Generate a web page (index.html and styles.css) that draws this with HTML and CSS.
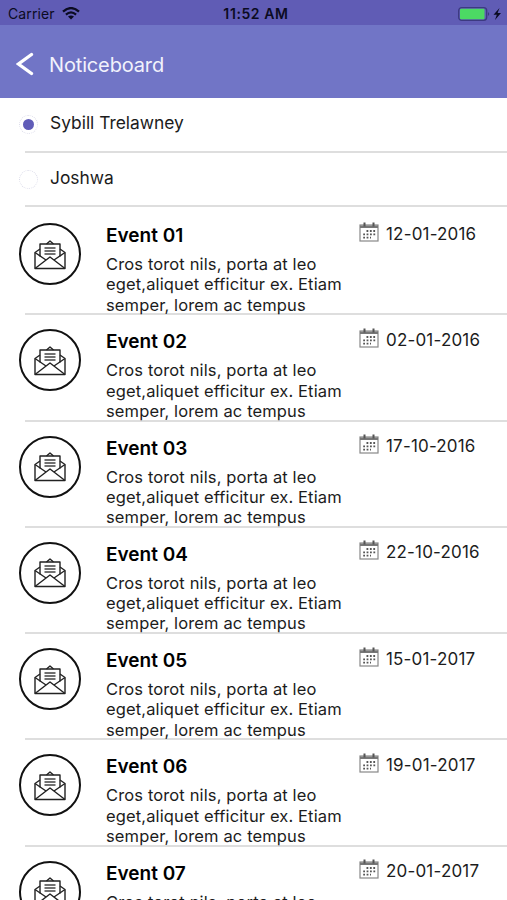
FILE: index.html
```html
<!DOCTYPE html>
<html lang="en">

<head>
    <meta charset="UTF-8">
    <meta name="viewport" content="width=device-width, initial-scale=1.0">
    <title>Noticeboard</title>
    <link rel="stylesheet" href="styles.css">
</head>

<body>
    <svg class="defs" width="0" height="0">
        <symbol id="mail" viewBox="0 0 32 30">
            <g fill="none" stroke="#222" stroke-width="1.4" stroke-linejoin="round">
                <path d="M6 9 L1 12.5 V28.5 H31 V12.5 L26 9" />
                <path d="M6 16.500 V4 H26 V16.500" />
                <path d="M12.500 4 L16 1 L19.500 4" />
                <path d="M1 12.500 L12 20 M31 12.500 L20 20" />
                <path d="M1 28.500 L16 17 L31 28.500" />
                <path d="M10.500 8 H21.500 M10.500 11 H21.500 M10.500 14 H21.500" stroke="#444" />
            </g>
        </symbol>
        <symbol id="calendar" viewBox="0 0 20 20">
            <rect x="1" y="3" width="18" height="16" fill="none" stroke="#888" stroke-width="1.200" />
            <path d="M1 3.500 H19 V6 H1 Z" fill="#777" />
            <path d="M5.500 .5 V4.500 M14.500 .5 V4.500" stroke="#555" stroke-width="2" />
            <path d="M7.500 9 H17 M4.200 12.300 H17 M4.200 15.600 H12" fill="none" stroke="#555" stroke-width="1.800" stroke-dasharray="1.800 1.600" />
        </symbol>
    </svg>

    <div class="status">
        <div class="carrier">
            <span>Carrier</span>
            <svg width="18" height="13" viewBox="0 0 18 13">
                <path d="M1 4.600 Q9 -2.400 17 4.600" fill="none" stroke="#0b0b22" stroke-width="2.300" />
                <path d="M3.900 7.600 Q9 3.200 14.100 7.600" fill="none" stroke="#0b0b22" stroke-width="2.200" />
                <path d="M9 12.500 L6 9.600 Q9 7.200 12 9.600 Z" fill="#0b0b22" />
            </svg>
        </div>
        <div class="time">11:52 AM</div>
        <div class="battery">
            <svg width="46" height="16" viewBox="0 0 46 16">
                <rect x="0.700" y="1.700" width="28" height="12.600" rx="3" fill="none" stroke="#3c3a80" stroke-width="1.300" />
                <rect x="2" y="2.800" width="24.500" height="10.400" rx="1" fill="#4cd964" />
                <path d="M30 6 Q32.500 8 30 10 Z" fill="#3c3a80" />
                <path d="M41.500 2 L35.500 8.800 H38.800 L37 14 L43 7 H39.600 Z" fill="#0b0b22" />
            </svg>
        </div>
    </div>

    <div class="header">
        <svg class="back" width="18" height="24" viewBox="0 0 18 24">
            <path d="M15.500 2.500 L2.500 12 L15.500 21.500" fill="none" stroke="#fff" stroke-width="3.300" stroke-linecap="round" />
        </svg>
        <h1>Noticeboard</h1>
    </div>

    <ul class="names">
        <li><i class="radio on"></i><span>Sybill Trelawney</span></li>
        <li><i class="radio"></i><span>Joshwa</span></li>
    </ul>

    <ul class="events">
        <li>
            <div class="circle"><svg><use href="#mail" /></svg></div>
            <div class="text">
                <h2>Event 01</h2>
                <p>Cros torot nils, porta at leo<br>eget,aliquet efficitur ex. Etiam<br>semper, lorem ac tempus</p>
            </div>
            <div class="date"><svg><use href="#calendar" /></svg><span>12-01-2016</span></div>
        </li>
        <li>
            <div class="circle"><svg><use href="#mail" /></svg></div>
            <div class="text">
                <h2>Event 02</h2>
                <p>Cros torot nils, porta at leo<br>eget,aliquet efficitur ex. Etiam<br>semper, lorem ac tempus</p>
            </div>
            <div class="date"><svg><use href="#calendar" /></svg><span>02-01-2016</span></div>
        </li>
        <li>
            <div class="circle"><svg><use href="#mail" /></svg></div>
            <div class="text">
                <h2>Event 03</h2>
                <p>Cros torot nils, porta at leo<br>eget,aliquet efficitur ex. Etiam<br>semper, lorem ac tempus</p>
            </div>
            <div class="date"><svg><use href="#calendar" /></svg><span>17-10-2016</span></div>
        </li>
        <li>
            <div class="circle"><svg><use href="#mail" /></svg></div>
            <div class="text">
                <h2>Event 04</h2>
                <p>Cros torot nils, porta at leo<br>eget,aliquet efficitur ex. Etiam<br>semper, lorem ac tempus</p>
            </div>
            <div class="date"><svg><use href="#calendar" /></svg><span>22-10-2016</span></div>
        </li>
        <li>
            <div class="circle"><svg><use href="#mail" /></svg></div>
            <div class="text">
                <h2>Event 05</h2>
                <p>Cros torot nils, porta at leo<br>eget,aliquet efficitur ex. Etiam<br>semper, lorem ac tempus</p>
            </div>
            <div class="date"><svg><use href="#calendar" /></svg><span>15-01-2017</span></div>
        </li>
        <li>
            <div class="circle"><svg><use href="#mail" /></svg></div>
            <div class="text">
                <h2>Event 06</h2>
                <p>Cros torot nils, porta at leo<br>eget,aliquet efficitur ex. Etiam<br>semper, lorem ac tempus</p>
            </div>
            <div class="date"><svg><use href="#calendar" /></svg><span>19-01-2017</span></div>
        </li>
        <li>
            <div class="circle"><svg><use href="#mail" /></svg></div>
            <div class="text">
                <h2>Event 07</h2>
                <p>Cros torot nils, porta at leo<br>eget,aliquet efficitur ex. Etiam<br>semper, lorem ac tempus</p>
            </div>
            <div class="date"><svg><use href="#calendar" /></svg><span>20-01-2017</span></div>
        </li>
    </ul>
</body>

</html>
```

FILE: styles.css
```css
* {
    margin: 0;
    padding: 0;
    box-sizing: border-box;
}

body {
    height: 900px;
    overflow: hidden;
    display: flex;
    flex-direction: column;
    background: #fff;
    color: #1c1c1c;
    font-family: Inter, "Liberation Sans", sans-serif;
}

ul {
    list-style: none;
}

.defs {
    display: none;
}

/* status bar */
.status {
    flex: none;
    height: 25px;
    padding: 2px 3px 0 8px;
    display: grid;
    grid-template-columns: 1fr auto 1fr;
    align-items: center;
    background: #605cb5;
    color: #0b0b22;
    font-size: 14px;
}

.carrier {
    display: flex;
    align-items: center;
    gap: 7px;
    letter-spacing: 0.1px;
}

.time {
    font-weight: 600;
    letter-spacing: 0.600px;
}

.battery {
    display: flex;
    justify-content: flex-end;
}

.header {
    flex: none;
    height: 73px;
    padding: 5px 0 0 16px;
    display: flex;
    align-items: center;
    gap: 15px;
    background: #7175c6;
    color: #fff;
}

.header h1 {
    margin-top: 1px;
    font-size: 20px;
    font-weight: 400;
    letter-spacing: -0.150px;
    color: #f2f2fc;
}

.names,
.events {
    flex: none;
}

.names li {
    height: 54px;
    padding: 0 0 6px 19px;
    display: flex;
    align-items: center;
    gap: 12px;
    font-size: 17.400px;
}

.names li:first-child {
    height: 55px;
}

/* divider starts 25px from the left edge */
.names li,
.events li {
    background: linear-gradient(#dedede, #dedede) 25px 100% / 100% 2px no-repeat;
}

.radio {
    width: 19px;
    height: 19px;
    margin-top: 4px;
    border: 1px dotted #dcdcea;
    border-radius: 50%;
    display: flex;
    align-items: center;
    justify-content: center;
}

.radio.on::after {
    content: "";
    width: 11px;
    height: 11px;
    border-radius: 50%;
    background: #605cb8;
}

.events {
    padding-top: 2px;
}

.events li {
    height: 106.300px;
    padding-left: 19px;
    display: flex;
    align-items: flex-start;
}

.circle {
    width: 62px;
    height: 62px;
    margin-top: 14px;
    padding-top: 1px;
    border: 2.500px solid #111;
    border-radius: 50%;
    display: flex;
    align-items: center;
    justify-content: center;
}

.circle svg {
    width: 32px;
    height: 30px;
}

.text {
    width: 253px;
    margin: 15px 0 0 25px;
    white-space: nowrap;
}

.text h2 {
    font-size: 19px;
    font-weight: 600;
    line-height: 24px;
    color: #000;
}

.text p {
    margin-top: 6px;
    font-size: 16.500px;
    line-height: 20.300px;
    letter-spacing: 0.130px;
}

.date {
    margin-top: 13.500px;
    display: flex;
    align-items: center;
    gap: 7px;
    font-size: 17px;
    line-height: 22px;
    letter-spacing: 0.180px;
}

.date svg {
    width: 20px;
    height: 20px;
    margin-top: -4px;
}
```
